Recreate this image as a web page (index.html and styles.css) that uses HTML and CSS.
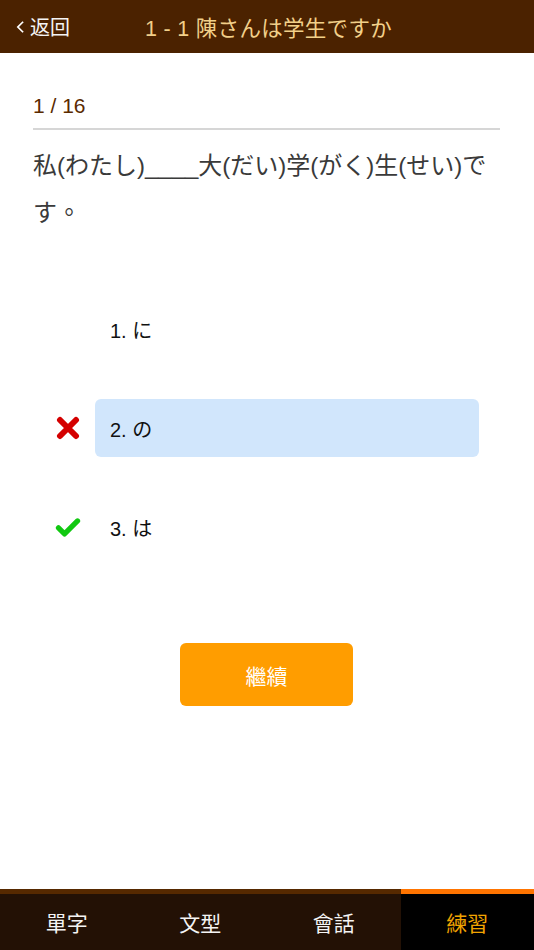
FILE: index.html
```html
<!DOCTYPE html>
<html lang="ja">
<head>
  <meta charset="UTF-8" />
  <meta name="viewport" content="width=device-width, initial-scale=1.0"/>
  <title>1 - 1 陳さんは学生ですか</title>
  <link rel="stylesheet" href="styles.css">
</head>
<body>
  <header class="topbar">
    <a class="back" href="#">
      <svg class="back-icon" viewBox="0 0 10 16" width="9" height="14">
        <polyline points="8,2 2,8 8,14" fill="none" stroke="#fff" stroke-width="2"/>
      </svg>
      返回
    </a>
    <h1 class="title">1 - 1 陳さんは学生ですか</h1>
  </header>

  <main class="quiz">
    <div class="counter">1 / 16</div>
    <p class="question" lang="zh-TW">私(わたし)____大(だい)学(がく)生(せい)です。</p>

    <ul class="options">
      <li class="option">
        <span class="mark"></span>
        <span class="choice">1. に</span>
      </li>
      <li class="option">
        <span class="mark">
          <svg viewBox="0 0 24 24" width="24" height="24">
            <path d="M4 4 L20 20 M20 4 L4 20" stroke="#d40000" stroke-width="6" stroke-linecap="round"/>
          </svg>
        </span>
        <span class="choice selected">2. の</span>
      </li>
      <li class="option">
        <span class="mark">
          <svg viewBox="0 0 30 24" width="30" height="24">
            <polyline points="4,13 11,20 26,5" fill="none" stroke="#11c811" stroke-width="6" stroke-linecap="round" stroke-linejoin="round"/>
          </svg>
        </span>
        <span class="choice">3. は</span>
      </li>
    </ul>

    <div class="actions">
      <button class="next">繼續</button>
    </div>
  </main>

  <nav class="tabbar" lang="zh-TW">
    <a class="tab" href="#">單字</a>
    <a class="tab" href="#">文型</a>
    <a class="tab" href="#">會話</a>
    <a class="tab active" href="#">練習</a>
  </nav>
</body>
</html>
```

FILE: styles.css
```css
body {
  margin: 0;
  height: 950px;
  display: flex;
  flex-direction: column;
  font-family: 'Liberation Sans', 'Noto Sans CJK JP', sans-serif;
  background-color: white;
}

.topbar {
  height: 53px;
  background-color: #4b2200;
  display: flex;
  align-items: center;
  padding: 0 16px;
}

.back {
  display: flex;
  align-items: center;
  gap: 5px;
  color: #f4f4f4;
  text-decoration: none;
  font-size: 20px;
  width: 129px;
}

.title {
  margin: 0;
  font-weight: normal;
  font-size: 21.5px;
  color: #f2d08a;
  letter-spacing: 0.3px;
}

.quiz {
  flex: 1;
  padding: 0 34px 0 33px;
}

.counter {
  margin-top: 41px;
  padding-bottom: 10px;
  font-size: 21px;
  line-height: 24px;
  color: #5a2a00;
  border-bottom: 2px solid #d6d6d6;
}

.question {
  margin: 12px 0 0;
  font-size: 24px;
  line-height: 47px;
  color: #3a3a3a;
  font-family: 'Liberation Sans', 'Noto Sans CJK TC', sans-serif;
}

.options {
  list-style: none;
  margin: 64px 21px 0 22px;
  padding: 0;
  display: flex;
  flex-direction: column;
  gap: 41px;
}

.option {
  display: flex;
  align-items: center;
  gap: 14px;
  height: 58px;
}

.mark {
  width: 26px;
  display: flex;
  justify-content: center;
}

.choice {
  flex: 1;
  height: 58px;
  display: flex;
  align-items: center;
  padding-left: 15px;
  font-size: 20px;
  color: #111;
  border-radius: 6px;
}

.choice.selected {
  background-color: #d1e6fc;
}

.actions {
  display: flex;
  justify-content: center;
  margin-top: 87px;
}

.next {
  width: 173px;
  height: 63px;
  background-color: #ff9d00;
  color: white;
  border: none;
  border-radius: 6px;
  font-size: 21px;
  font-family: 'Noto Sans CJK TC', sans-serif;
}

.tabbar {
  display: flex;
  background-color: #231105;
}

.tab {
  flex: 1;
  height: 56px;
  display: flex;
  align-items: center;
  justify-content: center;
  border-top: 5px solid #562900;
  color: #f4f4f4;
  text-decoration: none;
  font-size: 21px;
  font-family: 'Noto Sans CJK TC', sans-serif;
}

.tab.active {
  background-color: black;
  border-top-color: #ff7400;
  color: #f1a400;
}
```
